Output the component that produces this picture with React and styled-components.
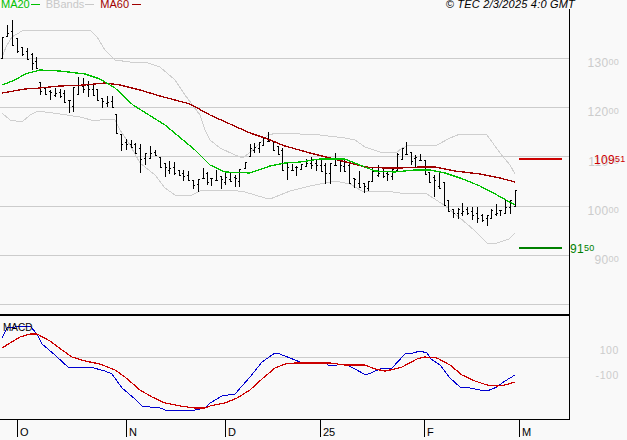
import React from 'react';
import styled, { createGlobalStyle } from 'styled-components';

const GlobalStyle = createGlobalStyle`
    html, body {
        margin: 0;
        padding: 0;
        background: #f9f9f9;
        overflow: hidden;
    }
`;

// [x, high y, low y] read straight off the picture, in page pixels
const bars = [
    [2,37,58],[7,25,36],[12,20,45],[17,38,52],[22,47,55],[27,48,59],[32,53,69],[36,57,68],
    [40,82,94],[45,87,94],[50,90,99],[55,88,96],[60,89,97],[64,90,102],[69,100,112],[73,87,111],
    [78,77,94],[83,78,92],[88,81,96],[93,83,95],[97,89,100],[102,98,107],[107,96,106],[112,96,107],
    [116,114,133],[121,134,150],[126,139,149],[131,140,147],[135,143,153],[140,144,172],[145,153,164],
    [150,146,158],[155,150,155],[160,157,167],[165,163,176],[169,161,173],[174,162,174],[179,170,175],
    [183,170,180],[188,171,180],[193,180,188],[198,179,191],[203,168,178],[207,172,184],[211,178,185],
    [216,170,180],[221,176,188],[225,173,184],[230,173,181],[235,175,186],[239,169,186],[245,162,168],
    [250,144,156],[254,143,152],[259,142,152],[263,137,145],[268,132,141],[273,141,150],[278,146,154],
    [282,148,170],[287,163,179],[292,164,170],[296,166,175],[301,164,169],[306,159,166],[311,157,168],
    [316,160,170],[321,158,171],[325,163,183],[330,163,183],[335,153,165],[340,160,171],[344,158,171],
    [349,162,183],[354,178,187],[359,171,187],[364,183,192],[368,181,190],[372,168,181],[378,165,176],
    [383,169,177],[387,172,180],[392,169,179],[397,153,170],[402,148,159],[406,142,154],[411,152,164],
    [415,155,166],[420,154,160],[425,160,174],[429,172,182],[434,175,196],[439,172,188],[444,182,205],
    [448,200,211],[453,209,217],[458,208,218],[462,203,215],[467,207,214],[472,207,219],[477,207,222],
    [482,214,221],[487,215,225],[491,209,218],[496,204,215],[500,210,215],[505,200,213],[510,200,213],
    [515,190,206],
];

const ma20 = '2,85 15,80 25,74 40,70 60,71 85,74 100,79 115,88 133,105 165,125 195,150 210,165 225,172 250,173 270,166 285,163 300,162 320,159 345,159 352,162 365,167 375,171 395,172 415,170 430,170 445,173 460,178 480,186 497,195 515,205';
const ma60 = '2,93 25,89 40,88 60,86 85,85 105,83 120,85 140,90 160,96 190,104 210,115 230,124 250,133 265,138 285,146 310,153 330,158 350,163 365,167 385,168 400,168 420,167 435,167 455,171 480,174 500,178 515,182';
const bbUpper = '2,57 6,47 12,37 22,31 35,30 60,31 90,30 97,37 105,50 115,60 130,62 145,62 160,67 175,80 185,95 200,115 205,130 210,140 220,148 235,155 243,158 255,148 268,135 277,133 300,134 320,135 345,138 355,140 365,147 380,152 396,153 402,148 410,145 437,145 450,138 460,134 487,135 500,153 510,165 515,174';
const bbLower = '2,113 10,120 22,122 30,115 38,111 60,114 80,117 95,121 105,119 115,120 120,130 130,145 140,163 155,175 165,188 175,195 190,196 200,191 230,190 245,192 265,198 270,199 290,191 310,186 325,183 335,181 350,184 362,191 385,191 400,193 427,194 444,205 460,218 474,230 487,243 497,243 509,239 515,233';
const macdLine = '2,338 7,328 15,327 30,326 37,334 42,344 55,355 69,368 75,367 90,367 105,371 112,374 122,388 135,399 142,406 150,407 158,407 165,410 180,411 195,410 205,408 210,403 222,396 235,394 250,377 262,362 275,353 277,353 285,356 295,360 300,362 325,363 330,366 345,364 353,368 366,375 380,369 392,368 405,354 413,353 420,351 427,353 431,359 440,365 450,378 460,387 470,388 480,390 487,391 497,387 505,381 515,375';
const signalLine = '2,348 10,343 20,337 30,334 37,334 50,341 62,350 72,357 85,361 100,364 115,370 125,377 140,390 152,397 165,403 180,406 195,408 205,408 210,406 225,403 237,398 250,390 262,379 275,368 285,364 295,363 330,363 345,365 365,365 375,369 385,371 395,369 402,367 417,359 425,357 437,358 450,365 462,375 475,381 487,385 497,386 505,385 515,382';

const priceGrid = [58, 107, 156, 206, 255, 304];

function barPath() {
    return bars.map(([x, high, low], i) => {
        const prev = bars[i - 1];
        const next = bars[i + 1];
        const clamp = (v) => Math.min(low, Math.max(high, Math.round(v)));
        const open = clamp(prev ? (prev[1] + prev[2]) / 2 : low);
        const close = clamp(next ? (next[1] + next[2]) / 2 : high);
        return `M${x + 0.5} ${high}V${low + 1}M${x - 1} ${open + 0.5}H${x}M${x + 1} ${close + 0.5}H${x + 2}`;
    }).join('');
}

function App() {
    return (
        <Page>
            <GlobalStyle />
            <Header>
                <Legend>
                    <LegendItem $color="#00c000" $gap={1}>MA20<i /></LegendItem>
                    <LegendItem $color="#c8c8c8" $gap={1}>BBands<i /></LegendItem>
                    <LegendItem $color="#a00000" $gap={3}>MA60<i /></LegendItem>
                </Legend>
                <Copyright>© TEC 2/3/2025 4:0 GMT</Copyright>
            </Header>

            <Row>
                <PricePlot>
                    <svg width="569" height="305" viewBox="0 9 569 305" shapeRendering="crispEdges">
                        {priceGrid.map((y) => (
                            <line key={y} x1="0" x2="569" y1={y + 0.5} y2={y + 0.5} stroke="#cccccc" />
                        ))}
                        <polyline points={bbUpper} fill="none" stroke="#cfcfcf" />
                        <polyline points={bbLower} fill="none" stroke="#cfcfcf" />
                        <path d={barPath()} fill="none" stroke="#000" />
                        <polyline points={ma60} fill="none" stroke="#a00000" strokeWidth="1.3" />
                        <polyline points={ma20} fill="none" stroke="#00c000" strokeWidth="1.3" />
                        <rect x="519" y="158" width="43" height="2" fill="#cc0000" />
                        <rect x="519" y="247" width="43" height="2" fill="#008000" />
                    </svg>
                </PricePlot>
                <PriceAxis>
                    {['130', '120', '110', '100', '90'].map((p) => (
                        <PriceRow key={p}>
                            <Big>{p}</Big><Small>00</Small>
                        </PriceRow>
                    ))}
                </PriceAxis>
                <Marker $top={146} $left={594} $color="#cc0000"><Big>109</Big><Small>51</Small></Marker>
                <Marker $top={235} $left={570} $color="#008000"><Big>91</Big><Small>50</Small></Marker>
            </Row>

            <Row>
                <MacdPlot>
                    <MacdTitle>MACD</MacdTitle>
                    <svg width="569" height="103" viewBox="0 316 569 103" shapeRendering="crispEdges">
                        <line x1="0" x2="569" y1="357.5" y2="357.5" stroke="#cccccc" />
                        <polyline points={macdLine} fill="none" stroke="#0000d0" />
                        <polyline points={signalLine} fill="none" stroke="#cc0000" strokeWidth="1.2" />
                    </svg>
                </MacdPlot>
                <MacdAxis>
                    <MacdLabel>100</MacdLabel>
                    <MacdLabel>-100</MacdLabel>
                </MacdAxis>
            </Row>

            <TimeAxis>
                <Tick $w={109}>O</Tick>
                <Tick $w={99}>N</Tick>
                <Tick $w={95}>D</Tick>
                <Tick $w={104}>25</Tick>
                <Tick $w={95}>F</Tick>
                <Tick $w={30}>M</Tick>
            </TimeAxis>
        </Page>
    );
}

const Page = styled.div`
    width: 627px;
    height: 440px;
    background: #f9f9f9;
    font-family: "Liberation Sans", Arial, sans-serif;
    display: flex;
    flex-direction: column;
    overflow: hidden;
`;

const Header = styled.div`
    height: 9px;
    display: flex;
    justify-content: space-between;
    align-items: center;
    padding: 0 52px 0 1px;
    font-size: 11px;
    line-height: 9px;
    white-space: nowrap;
`;

const Legend = styled.div`
    display: flex;
    gap: 6px;
`;

const LegendItem = styled.span`
    display: flex;
    align-items: center;
    gap: ${(p) => p.$gap}px;
    color: ${(p) => p.$color};
    i {
        display: block;
        width: 9px;
        height: 1px;
        background: ${(p) => p.$color};
    }
`;

const Copyright = styled.span`
    font-style: italic;
    letter-spacing: 0.2px;
    color: #000;
`;

const Row = styled.div`
    display: flex;
    position: relative;
`;

const PricePlot = styled.div`
    width: 569px;
    height: 305px;
    border-right: 1px solid #000;
    border-bottom: 2px solid #000;
    svg {
        display: block;
    }
`;

const PriceAxis = styled.div`
    flex: 1;
    padding-top: 49px;
    color: #cccccc;
`;

const PriceRow = styled.div`
    height: 49.25px;
    display: flex;
    justify-content: flex-end;
    align-items: flex-start;
    padding-right: 8px;
    line-height: 11px;
`;

const Big = styled.span`
    font-size: 12px;
    letter-spacing: 0.3px;
`;

const Small = styled.span`
    font-size: 9px;
    line-height: 9px;
    letter-spacing: 0.3px;
`;

const Marker = styled.div`
    position: absolute;
    top: ${(p) => p.$top}px;
    left: ${(p) => p.$left}px;
    display: flex;
    align-items: flex-start;
    line-height: 11px;
    color: ${(p) => p.$color};
`;

const MacdPlot = styled.div`
    position: relative;
    width: 569px;
    height: 103px;
    border-right: 1px solid #000;
    border-bottom: 1px solid #000;
    svg {
        display: block;
    }
`;

const MacdTitle = styled.span`
    position: absolute;
    top: 6px;
    left: 3px;
    font-size: 10px;
    line-height: 11px;
    color: #000;
`;

const MacdAxis = styled.div`
    flex: 1;
    display: flex;
    flex-direction: column;
    align-items: flex-end;
    gap: 14px;
    padding: 29px 8px 0 0;
    color: #cccccc;
`;

const MacdLabel = styled.span`
    font-size: 10.5px;
    line-height: 11px;
    letter-spacing: 0.6px;
`;

const TimeAxis = styled.div`
    display: flex;
    padding-left: 17px;
`;

const Tick = styled.div`
    width: ${(p) => p.$w}px;
    height: 17px;
    box-sizing: border-box;
    border-left: 1px solid #000;
    padding: 7px 0 0 2px;
    font-size: 11px;
    line-height: 11px;
    color: #000;
`;

export default App;
